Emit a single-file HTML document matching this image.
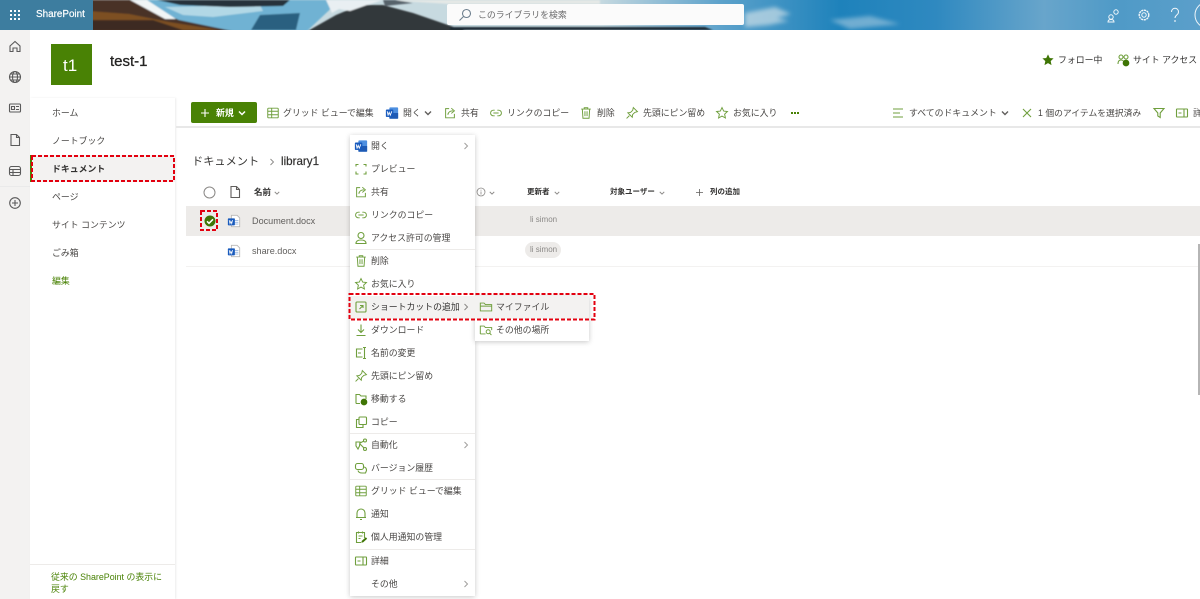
<!DOCTYPE html>
<html lang="ja"><head><meta charset="utf-8"><title>SharePoint</title>
<style>
*{box-sizing:border-box}
html,body{margin:0;padding:0;width:1200px;height:599px;overflow:hidden;background:#fff}
body{position:relative;font-family:"Liberation Sans","Noto Sans CJK JP",sans-serif;font-size:8.9px;color:#484644}
#w{position:absolute;left:0;top:0;width:1200px;height:599px;filter:blur(.35px);overflow:hidden}
.a{position:absolute}
.t{position:absolute;white-space:nowrap;line-height:16px;height:16px;letter-spacing:0}
.i{position:absolute;width:14px;height:14px;fill:none;stroke:#6f9f3d;stroke-width:1.1}
.c{position:absolute;width:8px;height:8px;fill:none;stroke:#605e5c;stroke-width:1.2}
.h{position:absolute;width:6px;height:6px;fill:none;stroke:#8a8886;stroke-width:1.2}
.b{font-weight:700;color:#323130}
.sep{position:absolute;left:350px;width:125px;height:1px;background:#edebe9}
</style></head><body>
<div id="w">
<svg width="0" height="0" style="position:absolute">
<defs>
<symbol id="grid" viewBox="0 0 16 16"><rect x="2" y="2.500" width="12" height="11" rx="1"/><path d="M2 6h12M2 10h12M6.500 2.500v11"/></symbol>
<symbol id="share" viewBox="0 0 16 16"><path d="M7 3H3v10.500h10V9"/><path d="M5.500 10c.5-3 3-4.500 6-4.500M9.500 2.500l3.500 3-3.500 3"/></symbol>
<symbol id="link" viewBox="0 0 16 16"><path d="M6.500 4.800H5a3.200 3.200 0 0 0 0 6.400h1.500M9.500 4.800H11a3.200 3.200 0 0 1 0 6.400H9.500M5 8h6"/></symbol>
<symbol id="trash" viewBox="0 0 16 16"><path d="M2.500 3.500h11M6 3.500V2h4v1.500M3.800 3.500l.7 10.500h7l.7-10.500M6.800 6v5.500M9.200 6v5.500"/></symbol>
<symbol id="pin" viewBox="0 0 16 16"><path d="M9.500 1.800l4.700 4.700-3 .8-2.500 2.500-.4 3-5-5 3-.4 2.500-2.500zM5 11l-3.200 3.200"/></symbol>
<symbol id="star" viewBox="0 0 16 16"><path d="M8 1.800l1.900 4 4.300.5-3.200 3 .9 4.400L8 11.500l-3.900 2.200.9-4.400-3.200-3 4.300-.5z"/></symbol>
<symbol id="word" viewBox="0 0 16 16"><rect x="5" y="1.500" width="10" height="13" rx="1" fill="#4d8fe0" stroke="none"/><rect x="5" y="8" width="10" height="6.500" fill="#1e5ab4" stroke="none"/><rect x="1" y="4" width="8.500" height="8.500" rx="1" fill="#185abd" stroke="none"/><path d="M2.500 6l1 4.500 1.300-3.300 1.200 3.300L7.800 6" stroke="#fff" stroke-width="1" fill="none"/></symbol>
<symbol id="doc" viewBox="0 0 16 16"><path d="M5 1.500h6.500l3 3V14.500H5z" fill="#fff" stroke="#b9b7b5" stroke-width="1"/><path d="M9 7.500h4M9 9.500h4M9 11.500h4" stroke="#9cb8e0" stroke-width="1"/><rect x="1" y="5" width="8" height="8" rx=".8" fill="#185abd" stroke="none"/><path d="M2.500 7l.9 4 1-2.700 1 2.700.9-4" stroke="#fff" stroke-width=".9" fill="none"/></symbol>
<symbol id="chev" viewBox="0 0 8 8"><path d="M1 2.500l3 3 3-3"/></symbol>
<symbol id="right" viewBox="0 0 8 8"><path d="M2.500 1l3 3-3 3"/></symbol>
<symbol id="folder" viewBox="0 0 16 16"><path d="M1.500 12.500v-9h4.300l1.500 1.700h7.200v7.300z M1.500 7h13"/></symbol>
</defs></svg>

<!-- banner -->
<svg class="a" style="left:0;top:0" width="1200" height="30" viewBox="0 0 1200 30">
<defs><linearGradient id="sky" x1="0" x2="1" y1="0" y2="0">
<stop offset="0" stop-color="#c9dbe0"/><stop offset=".5" stop-color="#c6d9e0"/><stop offset=".6" stop-color="#5da2cb"/><stop offset=".7" stop-color="#1e82bb"/><stop offset=".78" stop-color="#2f89c0"/><stop offset=".87" stop-color="#68a5cb"/><stop offset=".93" stop-color="#4f9ac7"/><stop offset="1" stop-color="#5b9fca"/></linearGradient>
<filter id="sb" x="-2%" y="-20%" width="104%" height="140%"><feGaussianBlur stdDeviation=".7"/></filter>
<filter id="sc" x="-20%" y="-50%" width="140%" height="200%"><feGaussianBlur stdDeviation="2"/></filter></defs>
<rect width="1200" height="30" fill="url(#sky)"/>
<g filter="url(#sc)" opacity=".65">
<path d="M745 13l30-6 16 7-14 4 12 3-20 4-24 2z" fill="#d6e4ea"/>
<path d="M830 20l40-4 30 8-50 5z" fill="#9cc5dd"/>
</g>
<g filter="url(#sb)">
<path d="M383 0h217v4H450z" fill="#e4e8e6"/>
<path d="M130 0H340L306 32H200z" fill="#6fb2d3"/>
<path d="M165 7l95-2 3 6-50 6-30-2z" fill="#b2d8e6"/>
<path d="M157 0H290L283 6 230 7 180 5z" fill="#25303a"/>
<path d="M260 15l40-2-4 17h-45z" fill="#2b6080"/>
<path d="M88 0h46l45 20 58 12H88z" fill="#4a3326"/>
<path d="M88 11l41 3 40 8 50 8H88z" fill="#7d4f22"/>
<path d="M88 20h65l30 10H88z" fill="#3e2c20"/>
<path d="M130 0h17l29 19-11 0z" fill="#f1f5f6"/>
<path d="M306 32l30-17 24-10 23 0 30 8 35 12 20 7z" fill="#33373b"/>
<path d="M326 0h57l-16 5-17 6-11-2-7 4z" fill="#e9eff2"/>
<path d="M383 0h12l18 3-28 3z" fill="#56626a"/>
<path d="M450 27h255l8 3H450z" fill="#1e2b36"/>
</g>
<rect width="93" height="30" fill="#3d7d9f"/>
<g fill="#fff"><rect x="10" y="10" width="2" height="2"/><rect x="14" y="10" width="2" height="2"/><rect x="18" y="10" width="2" height="2"/><rect x="10" y="14" width="2" height="2"/><rect x="14" y="14" width="2" height="2"/><rect x="18" y="14" width="2" height="2"/><rect x="10" y="18" width="2" height="2"/><rect x="14" y="18" width="2" height="2"/><rect x="18" y="18" width="2" height="2"/></g>
<g fill="none" stroke="#f0f6fa" stroke-width="1">
<circle cx="1111" cy="17" r="2.200"/><circle cx="1116" cy="12" r="2.200"/><path d="M1108 22c0-2 1.500-2.500 3-2.500s3 .5 3 2.500zM1114 8.500"/>
<circle cx="1144" cy="15" r="2.200"/><circle cx="1144" cy="15" r="4.800" stroke-dasharray="2.200 .6" stroke-width="1.400"/>
<path d="M1171.500 12c0-5 7-5 7 0 0 3-3.500 3-3.500 6"/><circle cx="1175" cy="21" r=".4"/>
<circle cx="1208" cy="15" r="13"/></g>
</svg>
<div class="t" style="left:36px;top:7px;color:#fff;font-size:9.900px;-webkit-text-stroke:.2px #fff;font-family:'Liberation Sans',sans-serif">SharePoint</div>
<div class="a" style="left:447px;top:4px;width:297px;height:21px;background:#fbfbfb;border-radius:2px"></div>
<svg class="i" style="left:458px;top:8px;stroke:#6d7f8e"><circle cx="8.500" cy="5.500" r="4"/><path d="M5.500 8.500L1.500 12.500"/></svg>
<div class="t" style="left:478px;top:7px;color:#69696a;font-size:8.900px">このライブラリを検索</div>

<!-- left rail -->
<div class="a" style="left:0;top:30px;width:30px;height:569px;background:#f3f2f1"></div>
<svg class="i" style="left:8px;top:39px;stroke:#5a5a5a"><path d="M2 7l5-4.500L12 7v5.500H9V9H5v3.500H2z"/></svg>
<svg class="i" style="left:8px;top:70px;stroke:#5a5a5a"><circle cx="7" cy="7" r="5.500"/><path d="M1.500 7h11M2.500 4h9M2.500 10h9"/><ellipse cx="7" cy="7" rx="2.500" ry="5.500"/></svg>
<svg class="i" style="left:8px;top:101px;stroke:#5a5a5a"><rect x="1.500" y="3" width="11" height="8" rx="1"/><path d="M3.500 5.500h3v3h-3zM8 5.500h3M8 8.500h3"/></svg>
<svg class="i" style="left:8px;top:133px;stroke:#5a5a5a"><path d="M3 1.500h5.500l3 3v8H3zM8.500 1.500v3h3"/></svg>
<svg class="i" style="left:8px;top:164px;stroke:#5a5a5a"><rect x="1.500" y="2.500" width="11" height="9" rx="2"/><path d="M1.500 5.500h11M1.500 8.500h11M5 5.500v6"/></svg>
<div class="a" style="left:0;top:186px;width:30px;height:1px;background:#eaeaea"></div>
<svg class="i" style="left:8px;top:196px;stroke:#5a5a5a"><circle cx="7" cy="7" r="5.300"/><path d="M7 4v6M4 7h6"/></svg>

<!-- header -->
<div class="a" style="left:51px;top:44px;width:41px;height:41px;background:#498205"></div>
<div class="t" style="left:63px;top:58px;color:#fff;font-size:17px">t1</div>
<div class="t" style="left:110px;top:54px;color:#252423;font-size:15px;-webkit-text-stroke:.3px #252423;font-family:'Liberation Sans',sans-serif">test-1</div>
<svg class="i" style="left:1042px;top:54px;fill:#3f7505;stroke:#3f7505;width:12px;height:12px" viewBox="0 0 16 16"><use href="#star"/></svg>
<div class="t" style="left:1058px;top:52px;color:#323130">フォロー中</div>
<svg class="i" style="left:1116px;top:53px;stroke:#6f9f3d"><circle cx="5" cy="4" r="2"/><circle cx="10" cy="4" r="2"/><path d="M2 11c0-3 1.500-4 3-4s3 1 3 3"/><circle cx="10" cy="10" r="2.800" fill="#3f7505" stroke="#3f7505"/></svg>
<div class="t" style="left:1133px;top:52px;color:#323130">サイト アクセス</div>

<!-- nav -->
<div class="a" style="left:30px;top:98px;width:145px;height:501px;background:#fff;box-shadow:1px 0 2px rgba(0,0,0,.08)"></div>
<div class="a" style="left:30px;top:155px;width:145px;height:27px;background:#f3f2f1;border-left:2px solid #498205"></div>
<div class="t" style="left:52px;top:105px">ホーム</div>
<div class="t" style="left:52px;top:133px">ノートブック</div>
<div class="t b" style="left:52px;top:161px">ドキュメント</div>
<div class="t" style="left:52px;top:189px">ページ</div>
<div class="t" style="left:52px;top:217px">サイト コンテンツ</div>
<div class="t" style="left:52px;top:245px">ごみ箱</div>
<div class="t" style="left:52px;top:273px;color:#498205">編集</div>
<div class="a" style="left:30px;top:564px;width:145px;height:1px;background:#edebe9"></div>
<div class="t" style="left:51px;top:569px;color:#498205">従来の SharePoint の表示に</div>
<div class="t" style="left:51px;top:581px;color:#498205">戻す</div>

<!-- toolbar -->
<div class="a" style="left:176px;top:126px;width:1024px;height:2px;background:#e8e8e8"></div>
<div class="a" style="left:191px;top:102px;width:66px;height:21px;background:#498205;border-radius:2px"></div>
<svg class="i" style="left:200px;top:108px;width:10px;height:10px;stroke:#fff" viewBox="0 0 10 10"><path d="M5 1v8M1 5h8"/></svg>
<div class="t" style="left:216px;top:105px;color:#fff;font-weight:700">新規</div>
<svg class="c" style="left:238px;top:109px;stroke:#fff;stroke-width:1.500"><use href="#chev"/></svg>

<svg class="i" style="left:266px;top:106px"><use href="#grid"/></svg>
<div class="t" style="left:283px;top:105px">グリッド ビューで編集</div>
<svg class="i" style="left:385px;top:106px"><use href="#word"/></svg>
<div class="t" style="left:403px;top:105px">開く</div>
<svg class="c" style="left:424px;top:109px;stroke-width:1.400"><use href="#chev"/></svg>
<svg class="i" style="left:443px;top:106px"><use href="#share"/></svg>
<div class="t" style="left:461px;top:105px">共有</div>
<svg class="i" style="left:489px;top:106px"><use href="#link"/></svg>
<div class="t" style="left:507px;top:105px">リンクのコピー</div>
<svg class="i" style="left:579px;top:106px"><use href="#trash"/></svg>
<div class="t" style="left:597px;top:105px">削除</div>
<svg class="i" style="left:625px;top:106px"><use href="#pin"/></svg>
<div class="t" style="left:643px;top:105px">先頭にピン留め</div>
<svg class="i" style="left:715px;top:106px"><use href="#star"/></svg>
<div class="t" style="left:733px;top:105px">お気に入り</div>
<div class="a" style="left:791px;top:112px;width:2px;height:2px;background:#498205;box-shadow:3px 0 #498205,6px 0 #498205"></div>

<svg class="i" style="left:891px;top:106px"><path d="M2 3h10M2 7h7M2 11h10"/></svg>
<div class="t" style="left:909px;top:105px">すべてのドキュメント</div>
<svg class="c" style="left:1001px;top:109px;stroke-width:1.400"><use href="#chev"/></svg>
<svg class="i" style="left:1020px;top:106px"><path d="M3 3l8 8M11 3l-8 8"/></svg>
<div class="t" style="left:1038px;top:105px;font-size:8.800px">1 個のアイテムを選択済み</div>
<svg class="i" style="left:1152px;top:106px"><path d="M2 2.500h10L8.200 7v4.500L5.800 10V7z"/></svg>
<svg class="i" style="left:1175px;top:106px"><rect x="1.500" y="3" width="11" height="8" rx=".5"/><path d="M9 3v8M3.500 7h3"/></svg>
<div class="t" style="left:1193px;top:105px">詳細</div>

<!-- content -->
<div class="t" style="left:192px;top:154px;font-size:11.200px;color:#3b3a39">ドキュメント</div>
<svg class="c" style="left:268px;top:158px;stroke:#8a8886;stroke-width:.9"><use href="#right"/></svg>
<div class="t" style="left:281px;top:154px;font-size:11.600px;color:#323130;-webkit-text-stroke:.2px #323130;font-family:'Liberation Sans',sans-serif">library1</div>

<svg class="a" style="left:203px;top:186px" width="13" height="13"><circle cx="6.500" cy="6.500" r="5.500" fill="none" stroke="#8a8886"/></svg>
<svg class="i" style="left:228px;top:185px;stroke:#605e5c"><path d="M3 1.500h5.500l3 3v8H3zM8.500 1.500v3h3"/></svg>
<div class="t b" style="left:254px;top:184px;font-size:8.500px">名前</div>
<svg class="h" style="left:274px;top:190px" viewBox="0 0 8 8"><use href="#chev"/></svg>
<svg class="a" style="left:476px;top:187px" width="10" height="10"><circle cx="5" cy="5" r="4" fill="none" stroke="#8a8886" stroke-width=".8"/><path d="M5 4.500v3M5 2.800v.8" stroke="#8a8886" stroke-width=".8"/></svg>
<svg class="h" style="left:489px;top:190px" viewBox="0 0 8 8"><use href="#chev"/></svg>
<div class="t b" style="left:527px;top:184px;font-size:7.500px">更新者</div>
<svg class="h" style="left:554px;top:190px" viewBox="0 0 8 8"><use href="#chev"/></svg>
<div class="t b" style="left:610px;top:184px;font-size:7.500px">対象ユーザー</div>
<svg class="h" style="left:659px;top:190px" viewBox="0 0 8 8"><use href="#chev"/></svg>
<svg class="a" style="left:695px;top:188px" width="9" height="9"><path d="M4.500 1v7M1 4.500h7" stroke="#605e5c" stroke-width=".8"/></svg>
<div class="t b" style="left:710px;top:184px;font-size:7.500px">列の追加</div>

<div class="a" style="left:186px;top:206px;width:1014px;height:30px;background:#edebe9"></div>
<div class="a" style="left:186px;top:266px;width:1014px;height:1px;background:#f3f2f1"></div>
<svg class="a" style="left:204px;top:215px" width="12" height="12"><circle cx="6" cy="6" r="5.500" fill="#3f7505"/><path d="M3 6.300l2 2 4-4" fill="none" stroke="#fff" stroke-width="1.500"/></svg>
<svg class="i" style="left:227px;top:214px"><use href="#doc"/></svg>
<svg class="i" style="left:227px;top:244px"><use href="#doc"/></svg>
<div class="t" style="left:252px;top:213px;color:#605e5c;font-size:9.100px">Document.docx</div>
<div class="t" style="left:252px;top:243px;color:#605e5c;font-size:9.100px">share.docx</div>
<div class="t" style="left:530px;top:212px;color:#8a8886;font-size:8px">li simon</div>
<div class="a" style="left:525px;top:242px;width:36px;height:16px;background:#edebe9;border-radius:8px"></div>
<div class="t" style="left:530px;top:242px;color:#8a8886;font-size:8px">li simon</div>
<div class="a" style="left:1198px;top:244px;width:2px;height:151px;background:#b5b5b5"></div>

<!-- context menu -->
<div class="a" style="left:350px;top:135px;width:125px;height:461px;background:#fff;box-shadow:0 1px 5px rgba(0,0,0,.22)"></div>
<div class="a" style="left:475px;top:296px;width:114px;height:45px;background:#fff;box-shadow:0 1px 5px rgba(0,0,0,.22)"></div>
<div class="a" style="left:350px;top:296px;width:125px;height:23px;background:#f3f2f1"></div>
<div class="a" style="left:475px;top:296px;width:114px;height:23px;background:#f3f2f1"></div>
<div class="sep" style="top:249px"></div><div class="sep" style="top:433px"></div><div class="sep" style="top:479px"></div><div class="sep" style="top:549px"></div>

<svg class="i" style="left:354px;top:139px"><use href="#word"/></svg><div class="t" style="left:371px;top:138px">開く</div>
<svg class="i" style="left:354px;top:162px"><path d="M2 4.500V2.500h2.500M9.500 2.500H12v2M12 9.500V12H9.500M4.500 12H2V9.500"/></svg><div class="t" style="left:371px;top:161px">プレビュー</div>
<svg class="i" style="left:354px;top:185px"><use href="#share"/></svg><div class="t" style="left:371px;top:184px">共有</div>
<svg class="i" style="left:354px;top:208px"><use href="#link"/></svg><div class="t" style="left:371px;top:207px">リンクのコピー</div>
<svg class="i" style="left:354px;top:231px"><circle cx="7" cy="4.500" r="3"/><path d="M2 12.500c0-2.500 2-3.500 5-3.500s5 1 5 3.500z"/></svg><div class="t" style="left:371px;top:230px">アクセス許可の管理</div>
<svg class="i" style="left:354px;top:254px"><use href="#trash"/></svg><div class="t" style="left:371px;top:253px">削除</div>
<svg class="i" style="left:354px;top:277px"><use href="#star"/></svg><div class="t" style="left:371px;top:276px">お気に入り</div>
<svg class="i" style="left:354px;top:300px"><rect x="2" y="2" width="10" height="10" rx="1"/><path d="M5.500 9L9 5.500M6 5.500h3V8"/></svg><div class="t" style="left:371px;top:299px;color:#323130">ショートカットの追加</div>
<svg class="i" style="left:354px;top:323px"><path d="M7 1.500v8M4 6.500l3 3 3-3M2.500 12.500h9"/></svg><div class="t" style="left:371px;top:322px">ダウンロード</div>
<svg class="i" style="left:354px;top:346px"><path d="M8.500 3H2.500v8h6M10.500 1.500v11M9 1.500h3M9 12.500h3M4 7h3"/></svg><div class="t" style="left:371px;top:345px">名前の変更</div>
<svg class="i" style="left:354px;top:369px"><use href="#pin"/></svg><div class="t" style="left:371px;top:368px">先頭にピン留め</div>
<svg class="i" style="left:354px;top:392px"><path d="M2 11.500V2.500h3.500l1.500 1.500h5v3M2 11.500h4"/><circle cx="10" cy="10" r="2.800" fill="#3f7505" stroke="#3f7505"/></svg><div class="t" style="left:371px;top:391px">移動する</div>
<svg class="i" style="left:354px;top:415px"><rect x="5" y="2" width="7.500" height="7.500" rx="1"/><path d="M5 4.500H2.500V12.500H9V9.500"/></svg><div class="t" style="left:371px;top:414px">コピー</div>
<svg class="i" style="left:354px;top:438px"><circle cx="11" cy="2.500" r="1.500"/><circle cx="11" cy="11" r="1.500"/><path d="M2 4h4l-.5 4-1.500 3-2-3zM6 5l4-2M6 6l4 4"/></svg><div class="t" style="left:371px;top:437px">自動化</div>
<svg class="i" style="left:354px;top:461px"><rect x="1.500" y="2.500" width="8" height="6" rx="2"/><path d="M4 9.500c.5 2 2 2.500 4 2.500h3.500l1-2.500c0-2-1-3.500-3-3.500"/></svg><div class="t" style="left:371px;top:460px">バージョン履歴</div>
<svg class="i" style="left:354px;top:484px"><use href="#grid"/></svg><div class="t" style="left:371px;top:483px">グリッド ビューで編集</div>
<svg class="i" style="left:354px;top:507px"><path d="M3 10.500V6a4 4 0 0 1 8 0v4.500zM2 10.500h10M6 12.500h2"/></svg><div class="t" style="left:371px;top:506px">通知</div>
<svg class="i" style="left:354px;top:530px"><path d="M10.500 8V2.500h-8v10h5M4.500 1.500v2M8.500 1.500v2M4.500 6h4M4.500 8.500h2"/><path d="M8 12l4.500-4" stroke-width="2" stroke="#3f7505"/></svg><div class="t" style="left:371px;top:529px">個人用通知の管理</div>
<svg class="i" style="left:354px;top:554px"><rect x="1.500" y="3" width="11" height="8" rx=".5"/><path d="M9 3v8M3.500 7h3"/></svg><div class="t" style="left:371px;top:553px">詳細</div>
<div class="t" style="left:371px;top:576px">その他</div>

<svg class="c" style="left:462px;top:142px;stroke:#a19f9d;stroke-width:1"><use href="#right"/></svg>
<svg class="c" style="left:462px;top:303px;stroke:#8a8886;stroke-width:1"><use href="#right"/></svg>
<svg class="c" style="left:462px;top:441px;stroke:#a19f9d;stroke-width:1"><use href="#right"/></svg>
<svg class="c" style="left:462px;top:580px;stroke:#a19f9d;stroke-width:1"><use href="#right"/></svg>

<svg class="i" style="left:479px;top:300px" viewBox="0 0 16 16"><use href="#folder"/></svg><div class="t" style="left:496px;top:299px">マイファイル</div>
<svg class="i" style="left:479px;top:323px" viewBox="0 0 16 16"><path d="M1.500 12.500v-9h4.300l1.500 1.700h7.200v3M1.500 12.500h6"/><circle cx="10.500" cy="10" r="2.300"/><path d="M12.200 11.700l2 2"/></svg><div class="t" style="left:496px;top:322px">その他の場所</div>

<!-- red dashed highlights -->
<svg class="a" style="left:0;top:0;pointer-events:none" width="1200" height="599">
<g fill="none" stroke="#e3000f" stroke-width="2" stroke-dasharray="4 2">
<rect x="32" y="156" width="142" height="25"/>
<rect x="201" y="211" width="16" height="19"/>
<rect x="349.500" y="294" width="245" height="25.500"/>
</g></svg>
</div>
</body></html>
